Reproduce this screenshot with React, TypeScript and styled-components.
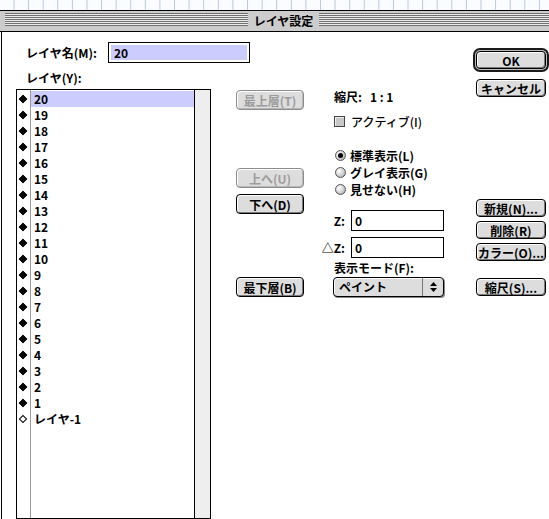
import React from "react";
import styled, { createGlobalStyle } from "styled-components";

const Global = createGlobalStyle`
  html, body { margin: 0; padding: 0; background: #fff; overflow: hidden; }
  body {
    font-family: "Noto Sans CJK JP", "Noto Sans", sans-serif;
    font-size: 12px;
    font-weight: 700;
    color: #000;
  }
`;

const Page = styled.div`
  width: 549px;
  height: 519px;
  overflow: hidden;
`;

const DesktopStrip = styled.div`
  height: 10px;
  background-color: #fbfcff;
  background-image: linear-gradient(to right, #b7c7e6 1px, transparent 1px);
  background-size: 14.6px 100%;
  background-position: 13.5px 0;
`;

const Window = styled.div`
  width: 566px;
`;

const TitleBar = styled.div`
  height: 20px;
  border-top: 1px solid #000;
  border-bottom: 1px solid #000;
  background: #cccccc;
  display: flex;
  align-items: flex-start;
  padding: 0 4px 0 5px;
`;

const Stripes = styled.div`
  flex: 1;
  height: 13px;
  margin-top: 2px;
  background: repeating-linear-gradient(to bottom, #707070 0 1px, #ececec 1px 2px);
`;

const TitleText = styled.div`
  padding: 0 6px;
  line-height: 20px;
  font-size: 12px;
  background: #cccccc;
`;

const Body = styled.div`
  display: flex;
  height: 487px;
  margin-left: 1px;
  border-left: 1px solid #000;
  padding-left: 14px;
  background: #fff;
`;

const LeftCol = styled.div`
  width: 195px;
  display: flex;
  flex-direction: column;
  flex-shrink: 0;
`;

const NameRow = styled.div`
  margin-top: 10px;
  height: 21px;
  padding-left: 10px;
  display: flex;
  align-items: center;
`;

const NameLabel = styled.div`
  width: 82px;
  flex-shrink: 0;
`;

const NameField = styled.div`
  width: 142px;
  height: 21px;
  flex-shrink: 0;
  box-sizing: border-box;
  border: 1px solid #000;
  padding: 2px;
  background: #fff;
`;

const Selected = styled.div`
  height: 15px;
  background: #ccccff;
  padding-left: 3px;
  line-height: 15px;
`;

const SectionLabel = styled.div`
  margin-top: 7px;
  padding-left: 10px;
  line-height: 16px;
`;

const ListBox = styled.div`
  margin-top: 3px;
  height: 440px;
  box-sizing: border-box;
  border: 1px solid #000;
  display: flex;
`;

const Rows = styled.div`
  flex: 1;
  padding-top: 1px;
  background: linear-gradient(to right, transparent 13px, #9a9a9a 13px, #9a9a9a 14px, transparent 14px);
`;

const Row = styled.div`
  height: 16px;
  display: flex;
`;

const MarkerCell = styled.div`
  width: 14px;
  flex-shrink: 0;
  display: flex;
  align-items: center;
  justify-content: center;
  padding-right: 3px;
  box-sizing: border-box;
`;

const Diamond = styled.span<{ $hollow?: boolean }>`
  width: 4px;
  height: 4px;
  transform: rotate(45deg);
  background: ${(p) => (p.$hollow ? "#fff" : "#000")};
  border: 1px solid #000;
`;

const RowLabel = styled.div<{ $selected?: boolean }>`
  flex: 1;
  padding-left: 3px;
  line-height: 16px;
  background: ${(p) => (p.$selected ? "#ccccff" : "transparent")};
`;

const ScrollTrack = styled.div`
  width: 15px;
  border-left: 1px solid #000;
  background: #eeeeee;
`;

const MidCol = styled.div`
  margin-left: 25px;
  width: 68px;
  flex-shrink: 0;
  display: flex;
  flex-direction: column;
`;

const MacButton = styled.div<{ $mt: number; $h?: number; $disabled?: boolean }>`
  margin-top: ${(p) => p.$mt}px;
  height: ${(p) => p.$h ?? 20}px;
  box-sizing: border-box;
  border-radius: 4px;
  background: #dddddd;
  border: 1px solid ${(p) => (p.$disabled ? "#8c8c8c" : "#000")};
  color: ${(p) => (p.$disabled ? "#9c9c9c" : "#000")};
  box-shadow: inset 1px 1px 0 #ffffff,
    inset -1px -1px 0 ${(p) => (p.$disabled ? "#b8b8b8" : "#7a7a7a")};
  display: flex;
  align-items: center;
  justify-content: center;
  white-space: nowrap;
  font-size: 12px;
`;

const InfoCol = styled.div`
  margin-left: 14px;
  width: 126px;
  flex-shrink: 0;
  display: flex;
  flex-direction: column;
`;

const InfoLine = styled.div<{ $mt: number }>`
  margin-top: ${(p) => p.$mt}px;
  padding-left: 16px;
  line-height: 16px;
  white-space: pre;
`;

const ScaleValue = styled.span`
  margin-left: 8px;
`;

const CheckRow = styled.div`
  margin-top: 8px;
  height: 16px;
  padding-left: 16px;
  display: flex;
  align-items: center;
  gap: 6px;
  font-weight: 500;
`;

const CheckBox = styled.span`
  width: 11px;
  height: 11px;
  box-sizing: border-box;
  border: 1px solid #444;
  background: #c8c8c8;
  box-shadow: inset 1px 1px 0 #eee;
`;

const RadioRow = styled.div<{ $mt: number }>`
  margin-top: ${(p) => p.$mt}px;
  height: 17px;
  padding-left: 17px;
  display: flex;
  align-items: center;
  gap: 4px;
`;

const Radio = styled.span<{ $on?: boolean }>`
  width: 11px;
  height: 11px;
  box-sizing: border-box;
  border-radius: 50%;
  border: 1px solid #555;
  background: radial-gradient(circle at 35% 35%, #ffffff 0, #d8d8d8 45%, #9a9a9a 100%);
  display: flex;
  align-items: center;
  justify-content: center;
  &::after {
    content: "";
    width: 5px;
    height: 5px;
    border-radius: 50%;
    background: ${(p) => (p.$on ? "#000" : "transparent")};
  }
`;

const FieldRow = styled.div<{ $mt: number }>`
  margin-top: ${(p) => p.$mt}px;
  height: 21px;
  display: flex;
  justify-content: flex-end;
  align-items: center;
  gap: 6px;
`;

const FieldLabel = styled.span``;

const Field = styled.div`
  width: 93px;
  height: 21px;
  box-sizing: border-box;
  border: 1px solid #000;
  padding-left: 3px;
  line-height: 19px;
`;

const Popup = styled.div`
  margin-top: 1px;
  margin-left: 15px;
  height: 20px;
  box-sizing: border-box;
  border: 1px solid #000;
  border-radius: 4px;
  background: #dddddd;
  box-shadow: inset 1px 1px 0 #fff, 1px 1px 0 #888;
  display: flex;
  align-items: stretch;
`;

const PopupText = styled.div`
  flex: 1;
  padding-left: 5px;
  line-height: 18px;
`;

const PopupArrows = styled.div`
  width: 20px;
  border-left: 1px solid #777;
  display: flex;
  align-items: center;
  justify-content: center;
`;

const RightCol = styled.div`
  margin-left: 29px;
  width: 76px;
  flex-shrink: 0;
  display: flex;
  flex-direction: column;
`;

const DefaultRing = styled.div`
  margin-top: 16px;
  height: 24px;
  box-sizing: border-box;
  border: 2px solid #1a1a1a;
  border-radius: 7px;
  padding: 1px;
  background: #bdbdbd;
  display: flex;
  flex-direction: column;
`;

const SideButton = styled(MacButton)`
  margin-left: 3px;
  width: 70px;
`;

const layers = ["20","19","18","17","16","15","14","13","12","11","10","9","8","7","6","5","4","3","2","1"];

export default function App() {
  return (
    <Page>
      <Global />
      <DesktopStrip />
      <Window>
        <TitleBar>
          <Stripes />
          <TitleText>レイヤ設定</TitleText>
          <Stripes />
        </TitleBar>
        <Body>
          <LeftCol>
            <NameRow>
              <NameLabel>レイヤ名(M):</NameLabel>
              <NameField>
                <Selected>20</Selected>
              </NameField>
            </NameRow>
            <SectionLabel>レイヤ(Y):</SectionLabel>
            <ListBox>
              <Rows>
                {layers.map((l, i) => (
                  <Row key={l}>
                    <MarkerCell>
                      <Diamond />
                    </MarkerCell>
                    <RowLabel $selected={i === 0}>{l}</RowLabel>
                  </Row>
                ))}
                <Row>
                  <MarkerCell>
                    <Diamond $hollow />
                  </MarkerCell>
                  <RowLabel>レイヤ-1</RowLabel>
                </Row>
              </Rows>
              <ScrollTrack />
            </ListBox>
          </LeftCol>

          <MidCol>
            <MacButton $mt={58} $disabled>最上層(T)</MacButton>
            <MacButton $mt={58} $disabled>上へ(U)</MacButton>
            <MacButton $mt={6}>下へ(D)</MacButton>
            <MacButton $mt={63}>最下層(B)</MacButton>
          </MidCol>

          <InfoCol>
            <InfoLine $mt={57}>
              縮尺:<ScaleValue>1 : 1</ScaleValue>
            </InfoLine>
            <CheckRow>
              <CheckBox />
              <span>アクティブ(I)</span>
            </CheckRow>
            <RadioRow $mt={18}>
              <Radio $on />
              <span>標準表示(L)</span>
            </RadioRow>
            <RadioRow $mt={0}>
              <Radio />
              <span>グレイ表示(G)</span>
            </RadioRow>
            <RadioRow $mt={0}>
              <Radio />
              <span>見せない(H)</span>
            </RadioRow>
            <FieldRow $mt={12}>
              <FieldLabel>Z:</FieldLabel>
              <Field>0</Field>
            </FieldRow>
            <FieldRow $mt={6}>
              <FieldLabel>△Z:</FieldLabel>
              <Field>0</Field>
            </FieldRow>
            <InfoLine $mt={2}>表示モード(F):</InfoLine>
            <Popup>
              <PopupText>ペイント</PopupText>
              <PopupArrows>
                <svg width="7" height="12" viewBox="0 0 7 12">
                  <path d="M3.5 1 L7 5 L0 5 Z" fill="#000" />
                  <path d="M0 7 L7 7 L3.5 11 Z" fill="#000" />
                </svg>
              </PopupArrows>
            </Popup>
          </InfoCol>

          <RightCol>
            <DefaultRing>
              <MacButton $mt={0} $h={18}>OK</MacButton>
            </DefaultRing>
            <SideButton $mt={7} $h={18}>キャンセル</SideButton>
            <SideButton $mt={102} $h={18}>新規(N)...</SideButton>
            <SideButton $mt={4} $h={18}>削除(R)</SideButton>
            <SideButton $mt={4} $h={18}>カラー(O)...</SideButton>
            <SideButton $mt={17} $h={18}>縮尺(S)...</SideButton>
          </RightCol>
        </Body>
      </Window>
    </Page>
  );
}
